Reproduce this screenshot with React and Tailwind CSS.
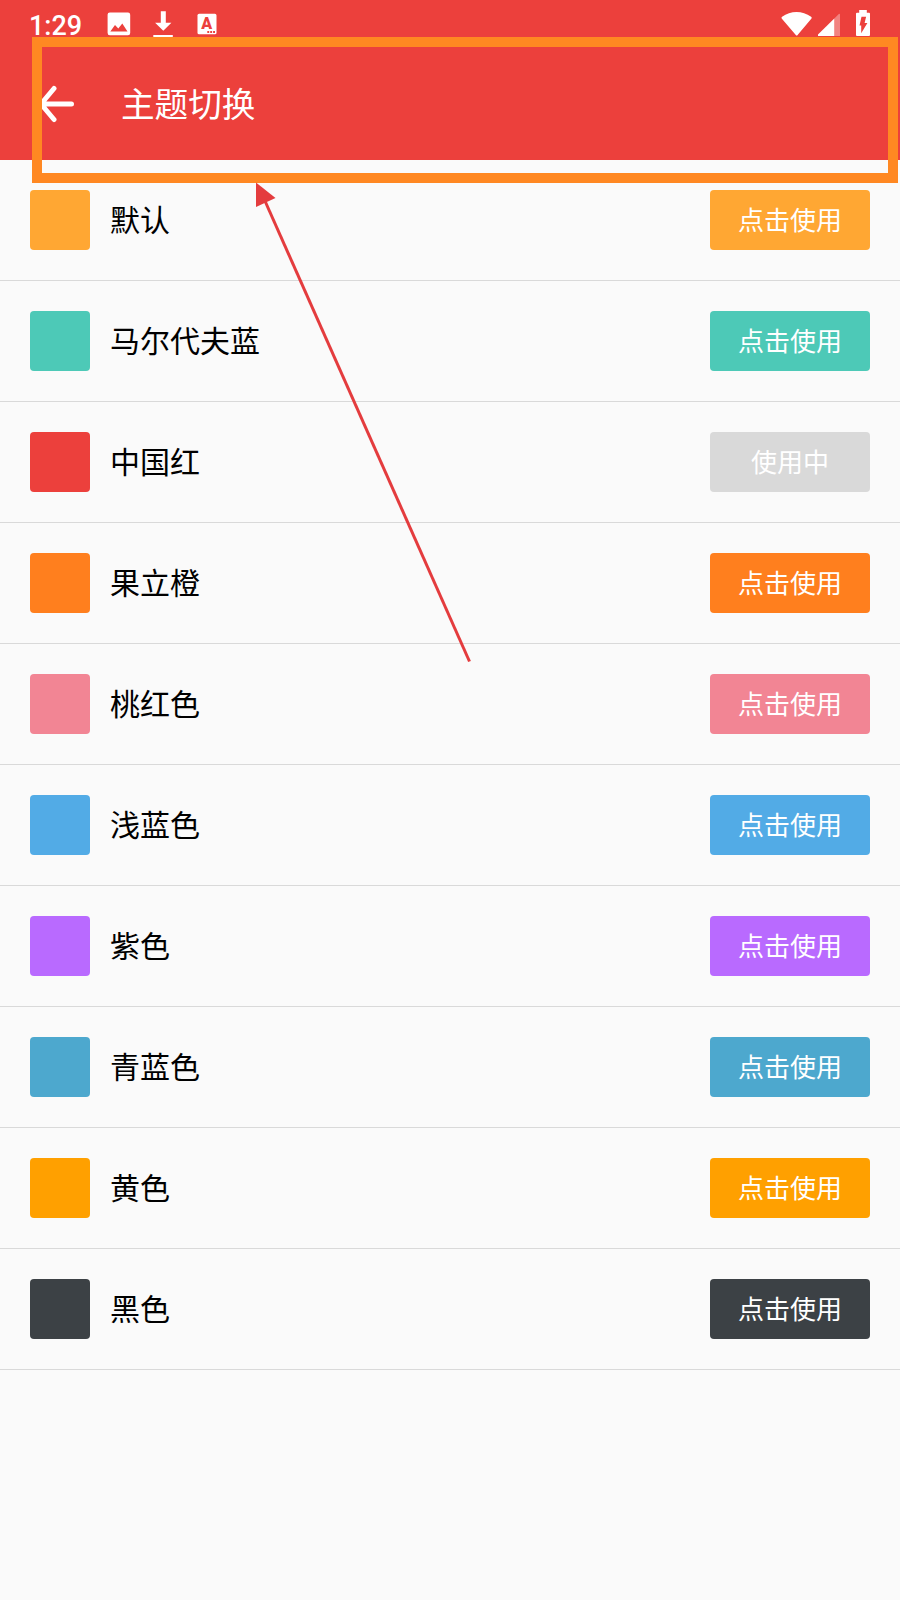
import React from 'react';

const themes = [
  { name: '默认', color: 'bg-[#ffa733]' },
  { name: '马尔代夫蓝', color: 'bg-[#4dc9b7]' },
  { name: '中国红', color: 'bg-[#ec403c]', active: true },
  { name: '果立橙', color: 'bg-[#ff7f1e]' },
  { name: '桃红色', color: 'bg-[#f28594]' },
  { name: '浅蓝色', color: 'bg-[#52abe6]' },
  { name: '紫色', color: 'bg-[#b96aff]' },
  { name: '青蓝色', color: 'bg-[#4da8ce]' },
  { name: '黄色', color: 'bg-[#ffa000]' },
  { name: '黑色', color: 'bg-[#3c4145]' },
];

const ImageIcon = () => (
  <svg width="24" height="24" viewBox="0 0 24 24" fill="none">
    <rect x="0.6" y="0.6" width="22.6" height="22.6" rx="2.2" fill="#fff" />
    <path d="M3.3 19.500 8 13l3.300 3.600L15.300 11.500 20.500 19.500z" fill="#ec403c" />
  </svg>
);

const DownloadIcon = () => (
  <svg width="20" height="28" viewBox="0 0 20 28" fill="#fff">
    <path d="M7.800 1.200h5v11.500h5.600L10.300 20.700l-8.200-8h5.700zM0.300 25h19.500v3H0.300z" />
  </svg>
);

const InputIcon = () => (
  <svg width="20" height="22" viewBox="0 0 20 22">
    <rect x="0.500" y="0.800" width="19" height="20.500" rx="1.600" fill="#fff" />
    <text x="9.800" y="16.300" textAnchor="middle" fill="#ec403c" className="font-['Roboto'] text-[16px] font-black">A</text>
    <path d="M10.300 18h1.900v1.900h-1.900zM13.200 18h1.900v1.900h-1.900zM16.100 18H18v1.900h-1.900z" fill="#ec403c" />
  </svg>
);

const WifiIcon = () => (
  <svg width="32" height="26" viewBox="0 0 32 26" fill="#fff">
    <path d="M1.100 5.800Q0 6.600.9 7.700L14.800 24q.9 1 1.800 0L30.300 7.700q.9-1.100-.2-1.900C21.500-.7 9.500-.7 1.100 5.800z" />
  </svg>
);

const SignalIcon = () => (
  <svg width="23" height="23" viewBox="0 0 23 23" fill="#fff">
    <path d="M16.300 5.400 20.800 1q1.200-.7 1.200.6V23h-5.700z" opacity=".35" />
    <path d="M16.300 5.400V23H0v-1.400z" />
  </svg>
);

const BatteryIcon = () => (
  <svg width="14" height="26" viewBox="0 0 14 26">
    <path d="M3.200 0h7.600v2.700H13q1 0 1 1V25q0 1-1 1H1q-1 0-1-1V3.700q0-1 1-1h2.200z" fill="#fff" />
    <path d="M5.500 6.700h4.600L8.600 13h2.800L5.200 23.300V15.500H3.500z" fill="#ec403c" />
  </svg>
);

const StatusBar = () => (
  <div className="flex h-12 items-start pl-[29px] pr-[30px] text-white">
    <span className="mt-[10px] w-[78px] font-['Roboto',sans-serif] text-[27px] font-medium leading-8">1:29</span>
    <div className="mt-3"><ImageIcon /></div>
    <div className="ml-[22px] mt-[10px]"><DownloadIcon /></div>
    <div className="ml-6 mt-[13px]"><InputIcon /></div>
    <div className="ml-auto flex">
      <div className="mt-[11px]"><WifiIcon /></div>
      <div className="ml-[5px] mt-[13px]"><SignalIcon /></div>
      <div className="ml-[15px] mt-[10px]"><BatteryIcon /></div>
    </div>
  </div>
);

const TitleBar = () => (
  <div className="flex h-28 items-center pl-[38px] text-white">
    <svg width="38" height="40" viewBox="0 0 38 40" fill="none" stroke="#fff" strokeWidth="5" strokeLinecap="round" strokeLinejoin="round">
      <path d="M33.500 20H3M16 4.500 3 20l13 15.500" />
    </svg>
    <h1 className="mb-0.5 ml-[45px] text-[33.6px] leading-none">主题切换</h1>
  </div>
);

const ThemeRow = ({ name, color, active = false }) => (
  <li className="flex h-[121px] items-center border-b border-[#d9d9d9] px-[30px]">
    <div className={`size-[60px] rounded ${color}`} />
    <span className="mb-1 ml-5 text-[30px] leading-none text-black">{name}</span>
    <button className={`ml-auto h-[60px] w-40 rounded pb-0.5 text-[26px] leading-none text-white ${active ? 'bg-[#d9d9d9]' : color}`}>
      {active ? '使用中' : '点击使用'}
    </button>
  </li>
);

// Highlight box and pointer drawn over the screen
const Annotation = () => (
  <>
    <div className="pointer-events-none absolute left-[32px] top-[37px] h-[146px] w-[866px] border-10 border-[#ff8822]" />
    <svg className="pointer-events-none absolute left-[250px] top-[180px]" width="230" height="490" viewBox="250 180 230 490">
      <path d="M265 201 469.500 661.500" stroke="#e43c3e" strokeWidth="3" />
      <path d="M256 182.500 275.500 198 256 207z" fill="#e43c3e" />
    </svg>
  </>
);

export default function App() {
  return (
    <div className="relative h-[1600px] w-[900px] overflow-hidden bg-[#fafafa] font-['Noto_Sans_CJK_SC',sans-serif]">
      <header className="bg-[#ec403c]">
        <StatusBar />
        <TitleBar />
      </header>
      <ul>
        {themes.map((theme) => (
          <ThemeRow key={theme.name} {...theme} />
        ))}
      </ul>
      <Annotation />
    </div>
  );
}
